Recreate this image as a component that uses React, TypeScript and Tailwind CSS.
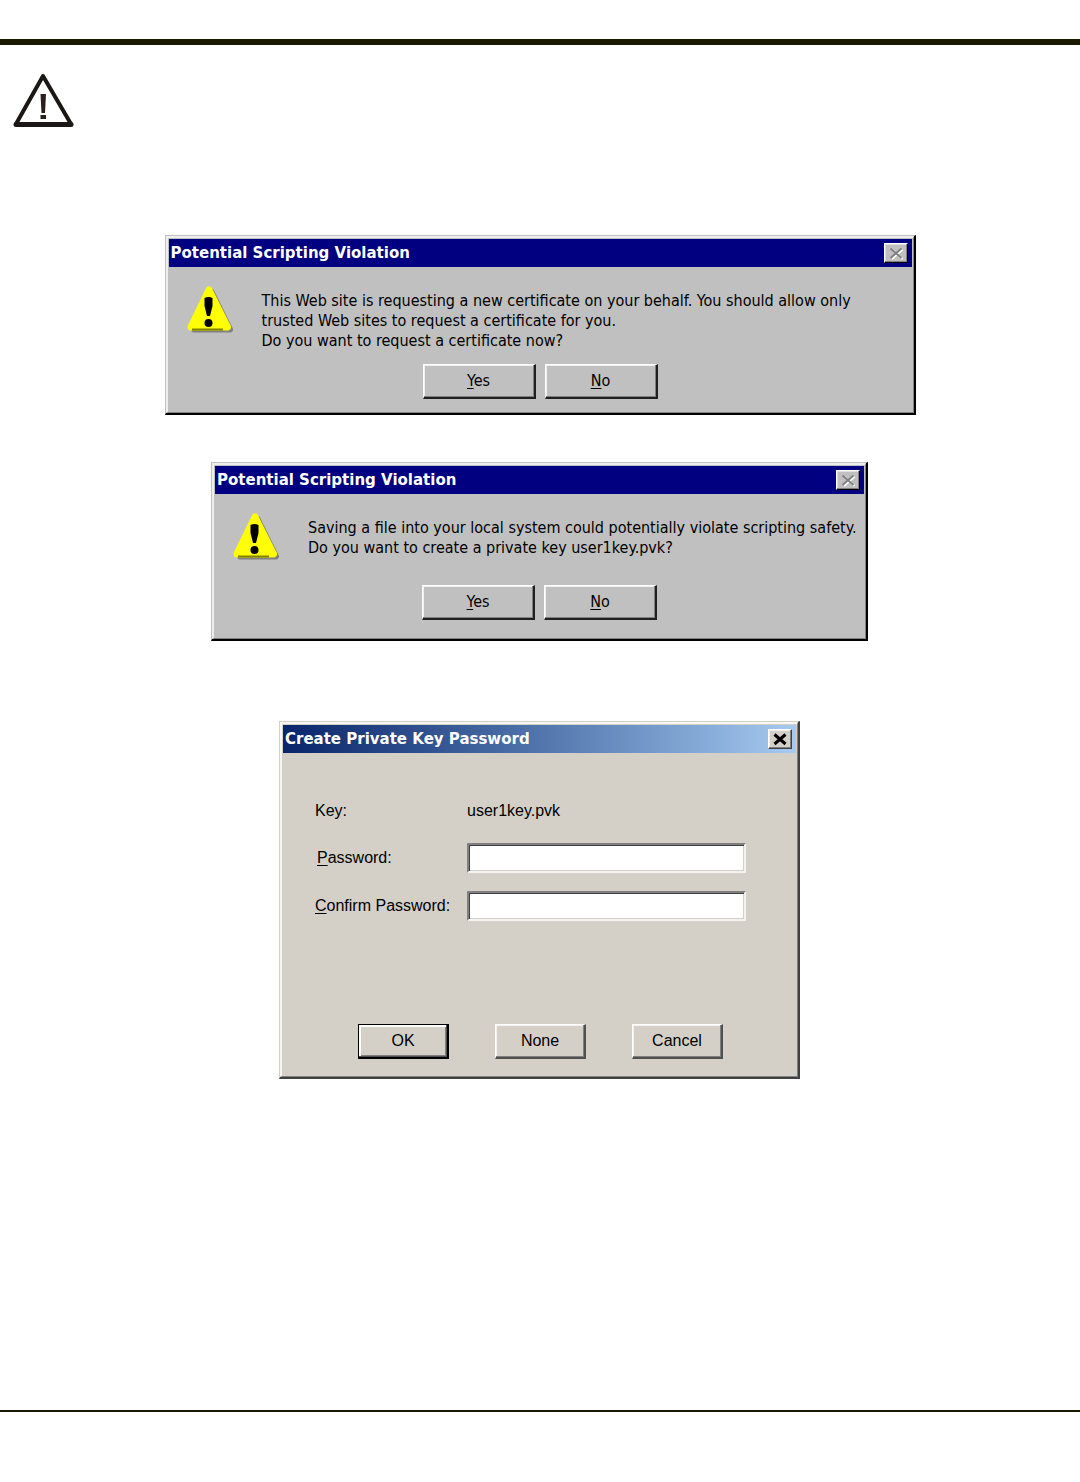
import React from 'react';

interface MessageDialogProps {
  title: string;
  lines: string[];
  className: string; // dialog width
  rowClassName: string; // height of the icon + message row
  bodyClassName: string;
}

const WarningOutlineIcon: React.FC<{ className?: string }> = ({ className }) => (
  <svg viewBox="0 0 62 56" className={className} role="img" aria-label="Caution">
    <path d="M31 3 L59 51 H4 Z" fill="none" stroke="#1c1717" strokeWidth="4" strokeLinejoin="round" />
    <path d="M4 51.4 H59" stroke="#1c1717" strokeWidth="5" strokeLinecap="round" />
    <path d="M28.5 21 h5.5 l-1 19 h-3.5 Z" fill="#2a1f1c" />
    <rect x="28.5" y="42" width="5.5" height="4" fill="#2a1f1c" />
  </svg>
);

const WarningIcon: React.FC = () => (
  <svg viewBox="0 0 48 48" className="h-12 w-12 shrink-0" role="img" aria-label="Warning">
    <path d="M24.5 7 L43 44.5 H7 Z" fill="#808080" stroke="#808080" strokeWidth="6" strokeLinejoin="round" />
    <path d="M22 5 L40.5 42 H4 Z" fill="#ffff00" stroke="#ffff00" strokeWidth="7" strokeLinejoin="round" />
    <path d="M5 44.5 H36" stroke="#808000" strokeWidth="2" />
    <path d="M17.5 13 q4 -2 8 0 v8 l-2.5 10 h-3 l-2.5 -10 Z" fill="#000" />
    <circle cx="21.5" cy="38" r="4" fill="#000" />
  </svg>
);

const CloseButton: React.FC<{ disabled?: boolean }> = ({ disabled }) => (
  <button
    type="button"
    aria-label="Close"
    disabled={disabled}
    className={
      disabled
        ? 'flex h-5 w-6 items-center justify-center border border-t-white border-l-white border-r-black border-b-black bg-[#c0c0c0] shadow-[inset_-1px_-1px_0_#808080,inset_1px_1px_0_#dfdfdf]'
        : 'flex h-5 w-6 items-center justify-center border border-t-white border-l-white border-r-[#404040] border-b-[#404040] bg-[#d4d0c8] shadow-[inset_-1px_-1px_0_#808080,inset_1px_1px_0_#f0eee8]'
    }
  >
    <svg viewBox="0 0 14 13" className="h-[13px] w-[14px]" fill="none">
      {disabled && <path d="M3 2.5 L13.5 12 M13.5 2.5 L3 12" stroke="#fff" strokeWidth="2" />}
      <path
        d="M1.5 1.5 L12.5 11 M12.5 1.5 L1.5 11"
        stroke={disabled ? '#808080' : '#000'}
        strokeWidth={disabled ? 2 : 3}
      />
    </svg>
  </button>
);

const MessageDialog: React.FC<MessageDialogProps> = ({ title, lines, className, rowClassName, bodyClassName }) => {
  const buttonClass =
    'h-[35px] w-[113px] border border-t-white border-l-white border-r-2 border-b-2 border-r-[#202020] border-b-[#202020] bg-[#c0c0c0] text-base leading-5 shadow-[inset_-1px_-1px_0_#808080,inset_1px_1px_0_#f0f0f0]';

  return (
    <section
      aria-label={title}
      className={`w-full border border-r-2 border-b-2 border-t-[#c0c0c0] border-l-[#c0c0c0] border-r-black border-b-black bg-[#c0c0c0] font-['DejaVu_Sans_Condensed','DejaVu_Sans',sans-serif] text-black ${className}`}
    >
      <div className="border-2 border-r border-b border-t-[#eeeeee] border-l-[#eeeeee] border-r-[#808080] border-b-[#808080] p-px">
        <header className="flex h-7 items-center justify-between bg-[#000080] pr-1 pl-[2px]">
          <h2 className="font-['DejaVu_Sans',sans-serif] text-[15px] leading-5 font-bold text-white">{title}</h2>
          <CloseButton disabled />
        </header>
        <div className={`pt-[18px] ${bodyClassName}`}>
          <div className={`flex gap-[27px] pl-[18px] ${rowClassName}`}>
            <WarningIcon />
            <p className="pt-[6px] text-base leading-5">
              {lines.map((line) => (
                <span key={line} className="block">{line}</span>
              ))}
            </p>
          </div>
          <div className="flex justify-center gap-[9px]">
            <button type="button" className={buttonClass}>
              <u className="underline-offset-2">Y</u>es
            </button>
            <button type="button" className={buttonClass}>
              <u className="underline-offset-2">N</u>o
            </button>
          </div>
        </div>
      </div>
    </section>
  );
};

const PasswordDialog: React.FC = () => {
  const inputClass =
    'h-[30px] w-full max-w-[279px] border-2 border-t-[#808080] border-l-[#808080] border-r-[#f4f2ee] border-b-[#f4f2ee] bg-white px-2 text-base shadow-[inset_1px_1px_0_#404040,inset_-1px_-1px_0_#d4d0c8] outline-none';
  const buttonClass =
    'h-[35px] w-[91px] border border-t-white border-l-white border-r-2 border-b-2 border-r-[#505050] border-b-[#505050] bg-[#d4d0c8] text-base leading-5 shadow-[inset_-1px_-1px_0_#808080,inset_1px_1px_0_#f4f2ee]';
  // the default button carries an extra black frame
  const defaultButtonClass =
    'h-[35px] w-[91px] border border-r-2 border-b-2 border-black bg-[#d4d0c8] text-base leading-5 shadow-[inset_-1px_-1px_0_#505050,inset_2px_2px_0_#ffffff,inset_-2px_-2px_0_#808080]';

  return (
    <section
      aria-label="Create Private Key Password"
      className="w-full max-w-[521px] border border-r-2 border-b-2 border-t-[#d4d0c8] border-l-[#d4d0c8] border-r-[#404040] border-b-[#404040] bg-[#d4d0c8] font-['Liberation_Sans',sans-serif] text-black"
    >
      <div className="border-2 border-r border-b border-t-[#f8f6f2] border-l-[#f8f6f2] border-r-[#808080] border-b-[#808080] p-px">
        <header className="flex h-7 items-center justify-between bg-linear-to-r from-[#0a246a] to-[#a6caf0] pr-1 pl-[2px]">
          <h2 className="font-['DejaVu_Sans',sans-serif] text-[15px] leading-5 font-bold text-white">
            Create Private Key Password
          </h2>
          <CloseButton />
        </header>
        <form className="px-8 pt-11 pb-4" onSubmit={(e) => e.preventDefault()}>
          <div className="grid grid-cols-[152px_1fr] items-center gap-y-[18px] text-base">
            <span className="leading-7">Key:</span>
            <span className="leading-7">user1key.pvk</span>
            <label htmlFor="password" className="pl-[2px]">
              <u className="underline-offset-2">P</u>assword:
            </label>
            <input id="password" type="password" className={inputClass} />
            <label htmlFor="confirm-password">
              <u className="underline-offset-2">C</u>onfirm Password:
            </label>
            <input id="confirm-password" type="password" className={inputClass} />
          </div>
          <div className="mt-[103px] flex justify-center gap-[46px] pl-[2px]">
            <button type="submit" className={defaultButtonClass}>OK</button>
            <button type="button" className={buttonClass}>None</button>
            <button type="button" className={buttonClass}>Cancel</button>
          </div>
        </form>
      </div>
    </section>
  );
};

const App: React.FC = () => {
  return (
    <div className="min-h-screen bg-white pt-[39px]">
      <div className="h-[6px] bg-[#1a1a00]" />
      <div className="pt-7 pl-3">
        <WarningOutlineIcon className="h-14 w-[62px]" />
      </div>
      <main className="pt-[106px]">
        <div className="flex justify-center">
          <MessageDialog
            title="Potential Scripting Violation"
            lines={[
              'This Web site is requesting a new certificate on your behalf. You should allow only',
              'trusted Web sites to request a certificate for you.',
              'Do you want to request a certificate now?',
            ]}
            className="max-w-[751px]"
            rowClassName="min-h-[79px]"
            bodyClassName="pb-3"
          />
        </div>
        <div className="flex flex-col items-center gap-20 pt-[47px] pr-px">
          <MessageDialog
            title="Potential Scripting Violation"
            lines={[
              'Saving a file into your local system could potentially violate scripting safety.',
              'Do you want to create a private key user1key.pvk?',
            ]}
            className="max-w-[657px]"
            rowClassName="min-h-[73px]"
            bodyClassName="pb-[17px]"
          />
          <PasswordDialog />
        </div>
      </main>
      <div className="mt-[331px] h-[2px] bg-[#1a1a00]" />
    </div>
  );
};

export default App;
